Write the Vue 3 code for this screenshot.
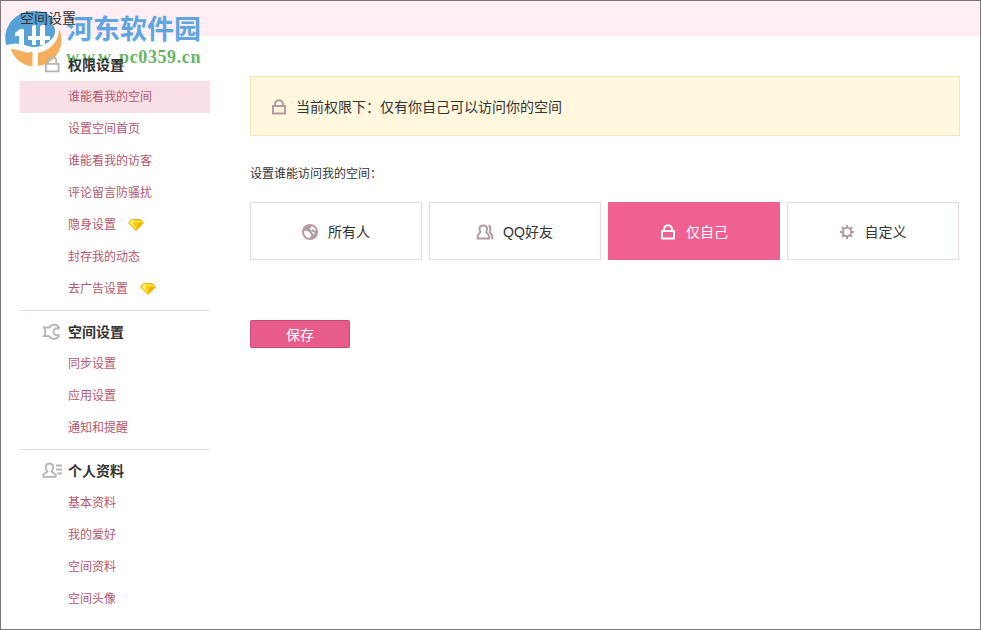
<script setup>
const groups = [
  {
    title: '权限设置',
    icon: 'lock',
    items: [
      { label: '谁能看我的空间', active: true },
      { label: '设置空间首页' },
      { label: '谁能看我的访客' },
      { label: '评论留言防骚扰' },
      { label: '隐身设置', vip: true },
      { label: '封存我的动态' },
      { label: '去广告设置', vip: true },
    ],
  },
  {
    title: '空间设置',
    icon: 'wrench',
    items: [{ label: '同步设置' }, { label: '应用设置' }, { label: '通知和提醒' }],
  },
  {
    title: '个人资料',
    icon: 'profile',
    items: [{ label: '基本资料' }, { label: '我的爱好' }, { label: '空间资料' }, { label: '空间头像' }],
  },
]
const options = [
  { label: '所有人', icon: 'globe' },
  { label: 'QQ好友', icon: 'friends' },
  { label: '仅自己', icon: 'lock', active: true },
  { label: '自定义', icon: 'gear' },
]
</script>

<template>
  <div class="window">
    <header class="topbar"><span class="title">空间设置</span></header>
    <div class="body">
      <nav class="sidebar">
        <section v-for="g in groups" :key="g.title" class="group">
          <h2 class="heading">
            <svg v-if="g.icon === 'lock'" class="hicon" width="20" height="18" viewBox="0 0 20 18">
              <path d="M3.900 7.900h12.700v7.400H3.900zM6.200 7.500V4.800Q6.200 1.500 8.700 1.500h3Q14.200 1.500 14.200 4.800v2.700" />
            </svg>
            <svg v-else-if="g.icon === 'wrench'" class="hicon" width="20" height="18" viewBox="0 0 20 18">
              <path d="M17.300 5.200Q15.500 1.700 12.200 1.700 9 1.700 7.300 4.500H1.900L3.200 6.500v4.700L1.900 13.200H7.300Q9 15.800 12.200 15.800q3.400 0 5.100-3.500M17.600 5.500H13.500L11.600 7.300v3L13.500 12.200h4.100" />
            </svg>
            <svg v-else class="hicon" width="20" height="18" viewBox="0 0 20 18">
              <path d="M7.500 1.500C4.800 1.500 3.600 3.300 3.800 5.600c.1 1.700.8 3 1.600 4L1.300 12.600v2.300h12.400v-2.300L9.600 9.600c.8-1 1.500-2.300 1.600-4 .2-2.300-1-4.100-3.700-4.100zM14 3.500h6M14 7.500h6M15.200 11.500H20" />
            </svg>
            <span>{{ g.title }}</span>
          </h2>
          <a v-for="it in g.items" :key="it.label" class="item" :class="{ active: it.active }">
            <span>{{ it.label }}</span>
            <svg v-if="it.vip" class="gem" width="16" height="12" viewBox="0 0 16 12">
              <path d="M3.500.6h9L15.500 4 8 11.500.5 4z" fill="#ffd91c" stroke="#dda51a" stroke-width=".9" />
              <path d="M1 4h14L8 11z" fill="#f8c900" />
              <path d="M4 1.200h3L5.200 4 8 10 1.500 4z" fill="#fff16b" />
              <path d="M10.800 4 8 10.500 14.500 4z" fill="#e8ad08" />
            </svg>
          </a>
        </section>
      </nav>

      <main class="content">
        <div class="notice">
          <svg class="low" width="16" height="16" viewBox="0 0 16 16">
            <path class="line" d="M2 7h12v7.500H2zM3.800 7.200Q3.800 1.300 8 1.300t4.200 5.900" />
          </svg>
          <span>当前权限下：仅有你自己可以访问你的空间</span>
        </div>
        <p class="label">设置谁能访问我的空间：</p>
        <div class="options">
          <div v-for="o in options" :key="o.label" class="option" :class="[o.icon, { chosen: o.active }]">
            <svg v-if="o.icon === 'globe'" class="low" width="16" height="16" viewBox="0 0 16 16">
              <circle cx="8" cy="8" r="8" fill="#b39aa3" />
              <path d="M10 2.200q3 1 4 4.300l-1.500.3-1.700-1.500L9 6.500 7.700 4.800zM1.700 7.500 4 6.500l3 1.200L9.500 11l-2 3.300Q2.500 13 1.700 7.500zM9 7l2.500 1 1.500 2-1.500.5z" fill="#fff" />
            </svg>
            <svg v-else-if="o.icon === 'friends'" class="low" width="18" height="16" viewBox="0 0 18 16">
              <path class="line" d="M7.300 1.500C4.600 1.500 3.300 3.200 3.500 5c.1 1.500.5 2.200.9 3L1.700 11.500v3h11.200v-3L10.200 8c.4-.8.800-1.500.9-3 .2-1.800-1.100-3.500-3.800-3.500zM12.800 1.300q1.800 1.200 1.500 4-.1 1.500-.5 2.700l2.400 3.500v3.700" />
            </svg>
            <svg v-else-if="o.icon === 'lock'" class="low" width="16" height="16" viewBox="0 0 16 16">
              <path class="line" d="M2 7h12v7.500H2zM3.800 7.200Q3.800 1.300 8 1.300t4.200 5.900" />
            </svg>
            <svg v-else class="low" width="14" height="14" viewBox="0 0 14 14">
              <circle class="line" cx="7" cy="7" r="4.200" />
              <path class="line" d="M7 0v2.500M7 11.500V14M0 7h2.500M11.500 7H14M2 2l1.700 1.700M10.300 10.300 12 12M2 12l1.700-1.700M10.300 3.700 12 2" />
            </svg>
            <span>{{ o.label }}</span>
          </div>
        </div>
        <button class="save">保存</button>
      </main>
    </div>

    <div class="watermark">
      <svg width="60" height="60" viewBox="0 0 60 60">
        <path d="M1 36C-3 17 11 2 29 2c9 0 16 3 20 8l-3 4c4 3 5 8 3 13-6 9-16 14-26 12-7-2-14-5-22-3z" fill="#3f97d3" />
        <path d="M54 20C62 37 50 55 33 57V44C43 42 51 34 54 20zM6 40c6 0 11 3 18 4v13C15 54 8 48 6 40z" fill="#f5a346" />
        <path d="M1 38C9 31 18 36 27 38 38 39 50 31 54 18 55 34 42 46 24 43 14 40 8 36 3 40z" fill="#fff" />
        <path d="M15 20l-5 4v3h4v9h5V20zM27 17l4-2v12h4V17l5-2v12h5v4h-5v5h-5v-5h-4v5h-4v-5h-4v-4h4z" fill="#fff" />
        <path d="M24 43h3.500v14H24z" fill="#f5a346" />
      </svg>
      <div class="wtext">
        <span class="wname">河东软件园</span>
        <span class="wurl"><span class="www">www</span>.pc0359.cn</span>
      </div>
    </div>
  </div>
</template>

<style>
body { margin: 0; background: #fff; }
</style>

<style scoped>
.window {
  position: relative;
  box-sizing: border-box;
  width: 981px;
  height: 630px;
  border: 1px solid #777;
  overflow: hidden;
  background: #fff;
  color: #333;
  font-family: "Liberation Sans", "Noto Sans CJK SC", sans-serif;
}
.topbar {
  height: 35px;
  line-height: 34px;
  padding-left: 19px;
  background: #ffeef3;
  font-size: 14px;
}
.title, .heading { position: relative; z-index: 2; }
.body { display: flex; padding: 13px 20px 0 19px; }
.sidebar { width: 190px; margin-right: 40px; }
.group { padding-bottom: 5px; }
.group + .group { border-top: 1px solid #f5dbe1; padding-top: 5px; }
.heading {
  display: flex;
  align-items: center;
  gap: 6px;
  height: 32px;
  margin: 0;
  padding-left: 22px;
  font-size: 14px;
  font-weight: 700;
}
.heading span { padding-bottom: 2px; }
.hicon { fill: none; stroke: #b5b5b5; stroke-width: 1.8; overflow: visible; }
.item {
  display: flex;
  align-items: center;
  gap: 12px;
  height: 32px;
  padding-left: 48px;
  font-size: 12px;
  color: #b4586f;
}
.item span { padding-bottom: 3px; }
.gem { margin-bottom: 1px; }
.item.active { background: #f9e0e7; }
.content { flex: 1; padding-top: 27px; }
.notice {
  display: flex;
  align-items: center;
  gap: 9px;
  box-sizing: border-box;
  height: 60px;
  padding-left: 20px;
  border: 1px solid #f1e6b4;
  background: #fff8df;
  font-size: 14px;
}
.low { margin-top: 2px; }
.label { margin: 29px 0 18px; height: 19px; line-height: 19px; font-size: 12px; }
.options { display: flex; gap: 7px; }
.option {
  display: flex;
  align-items: center;
  justify-content: center;
  gap: 10px;
  box-sizing: border-box;
  width: 172px;
  height: 58px;
  border: 1px solid #e8dce2;
  font-size: 14px;
}
.option.friends { gap: 9px; padding-right: 1px; }
.option.gear { gap: 11px; }
.line { fill: none; stroke: #b39aa3; stroke-width: 2; }
.chosen { border-color: #f06090; background: #f06090; color: #fff; }
.chosen .line { stroke: #fff; }
.save {
  display: block;
  width: 100px;
  height: 28px;
  margin-top: 60px;
  padding: 0;
  border: 1px solid #c94c77;
  border-radius: 2px;
  background: #e75c8b;
  color: #fff;
  font: inherit;
  font-size: 14px;
}
.watermark { position: absolute; left: 4px; top: 8px; display: flex; opacity: .88; pointer-events: none; }
.wtext { display: flex; flex-direction: column; padding: 6px 0 0 1px; white-space: nowrap; }
.wname { font-size: 27px; line-height: 30px; font-weight: 700; color: #4a9be0; }
.wurl { font-family: "Liberation Serif", serif; font-size: 18px; line-height: 24px; font-weight: 700; color: #4fae50; letter-spacing: .6px; }
.www { letter-spacing: 3px; }
</style>
